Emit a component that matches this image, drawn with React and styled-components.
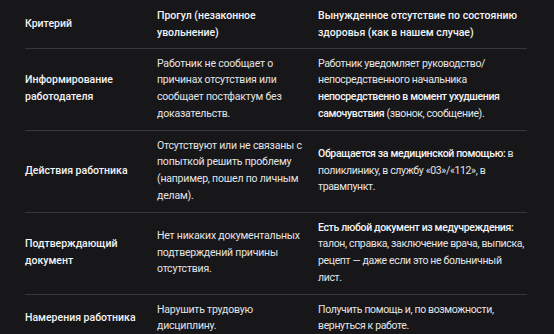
import React from 'react'
import styled, { createGlobalStyle } from 'styled-components'

const GlobalStyle = createGlobalStyle`
  html, body {
    margin: 0;
    padding: 0;
    background: #171719;
  }
  body {
    font-family: Roboto, "Open Sans", sans-serif;
    -webkit-font-smoothing: antialiased;
  }
`

const rows = [
  {
    name: 'Информирование работодателя',
    truancy: 'Работник не сообщает о причинах отсутствия или сообщает постфактум без доказательств.',
    absence: <>Работник уведомляет руководство/непосредственного начальника <b>непосредственно в момент ухудшения самочувствия</b> (звонок, сообщение).</>
  },
  {
    name: 'Действия работника',
    truancy: 'Отсутствуют или не связаны с попыткой решить проблему (например, пошел по личным делам).',
    absence: <><b>Обращается за медицинской помощью:</b> в поликлинику, в службу «03»/«112», в травмпункт.</>
  },
  {
    name: 'Подтверждающий документ',
    truancy: 'Нет никаких документальных подтверждений причины отсутствия.',
    absence: <><b>Есть любой документ из медучреждения:</b> талон, справка, заключение врача, выписка, рецепт — даже если это не больничный лист.</>
  },
  {
    name: 'Намерения работника',
    truancy: 'Нарушить трудовую дисциплину.',
    absence: 'Получить помощь и, по возможности, вернуться к работе.'
  }
]

function App() {
  return (
    <Page>
      <GlobalStyle />
      <Table>
        <colgroup>
          <col style={{ width: '126px' }} />
          <col style={{ width: '161px' }} />
          <col />
        </colgroup>
        <thead>
          <Row>
            <Th>Критерий</Th>
            <Th>Прогул (незаконное увольнение)</Th>
            <Th>Вынужденное отсутствие по состоянию здоровья (как в нашем случае)</Th>
          </Row>
        </thead>
        <tbody>
          {rows.map((row) => (
            <Row key={row.name}>
              <Td strong>{row.name}</Td>
              <Td spacing="-0.2px">{row.truancy}</Td>
              <Td spacing="-0.35px">{row.absence}</Td>
            </Row>
          ))}
        </tbody>
      </Table>
    </Page>
  )
}

export default App

const Page = styled.div`
  padding: 0 27px 0 25px;
  width: 502px;
`
const Table = styled.table`
  width: 100%;
  table-layout: fixed;
  border-collapse: collapse;
  font-size: 10.5px;
  line-height: 16.75px;
  color: #e4e4e6;
`
const Row = styled.tr`
  border-bottom: 1px solid #38383b;
  tbody &:last-child {
    border-bottom: none;
  }
`
const Th = styled.th`
  text-align: left;
  vertical-align: middle;
  font-weight: 500;
  color: #f4f4f6;
  padding: 8px 6px 6px;
  &:first-child { padding-left: 0; }
  &:last-child { padding-right: 0; }
`
const Td = styled.td`
  vertical-align: middle;
  font-weight: ${(props) => (props.strong ? 500 : 400)};
  color: ${(props) => (props.strong ? '#f4f4f6' : '#e4e4e6')};
  letter-spacing: ${(props) => props.spacing || '0'};
  padding: 7px 6px;
  &:first-child { padding-left: 0; }
  &:last-child { padding-right: 0; }
  b { font-weight: 500; color: #f4f4f6; }
`
